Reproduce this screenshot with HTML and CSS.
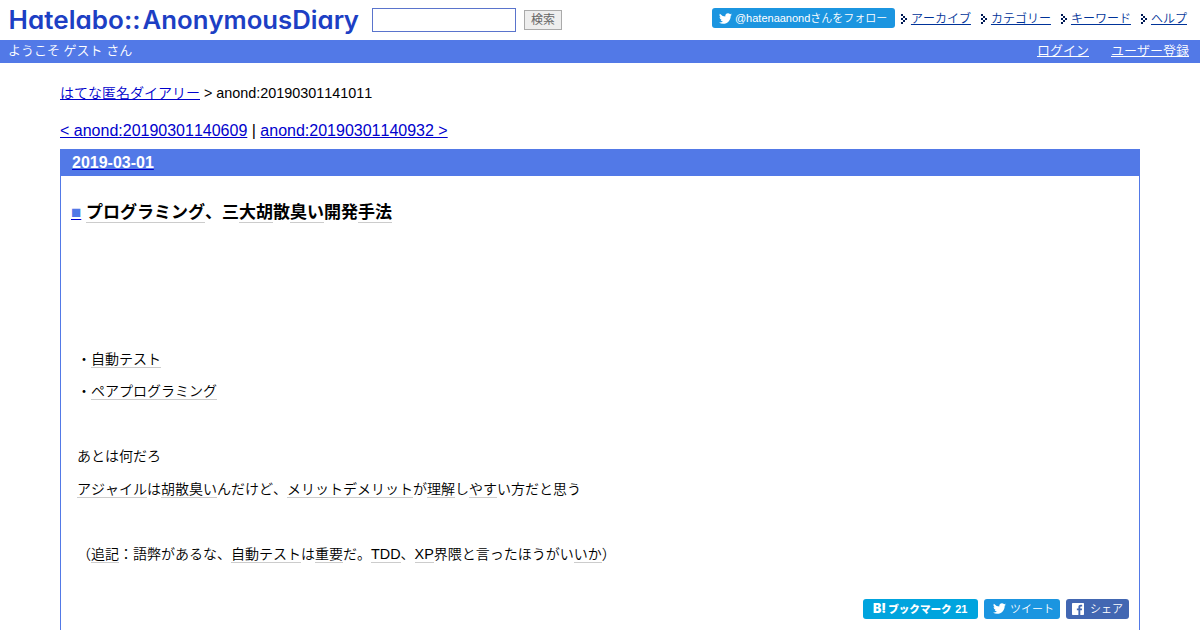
FILE: index.html
```html
<!DOCTYPE html>
<html lang="ja">
<head>
    <meta charset="utf-8">
    <title>プログラミング、三大胡散臭い開発手法</title>
    <link rel="stylesheet" href="styles.css">
</head>
<body>
    <header class="header">
        <a class="logo" href="#">
            <svg width="352" height="40" viewBox="0 0 352 40" xmlns="http://www.w3.org/2000/svg">
                <text x="-0.5" y="28.5" textLength="132" lengthAdjust="spacingAndGlyphs">Hatelabo::</text>
                <text x="133.5" y="28.5" textLength="216.5" lengthAdjust="spacingAndGlyphs">AnonymousDiary</text>
            </svg>
        </a>
        <form class="search">
            <input class="search-word" type="text">
            <button class="search-button" type="button">検索</button>
        </form>
        <div class="header-menu">
            <a class="follow-button" href="#">
                <svg class="bird" viewBox="0 0 24 24"><path d="M24 4.6a10 10 0 0 1-2.8.8 5 5 0 0 0 2.1-2.7 10 10 0 0 1-3.1 1.2 4.9 4.9 0 0 0-8.4 4.5A14 14 0 0 1 1.7 3.2a4.9 4.9 0 0 0 1.5 6.5A5 5 0 0 1 1 9.1v.1a4.9 4.9 0 0 0 3.9 4.8 5 5 0 0 1-2.2.1 4.9 4.9 0 0 0 4.6 3.4A9.9 9.9 0 0 1 0 19.5a14 14 0 0 0 7.5 2.2c9.1 0 14.3-7.7 14-14.6A10 10 0 0 0 24 4.6z"/></svg>
                <span>@hatenaanondさんをフォロー</span>
            </a>
            <ul class="menu">
                <li><svg class="arrow" viewBox="0 0 6 10"><path d="M0 0h2v2H0zM2 2h2v2H2zM0 4h2v2H0zM4 4h2v2H4zM2 6h2v2H2zM0 8h2v2H0z"/></svg><a href="#">アーカイブ</a></li>
                <li><svg class="arrow" viewBox="0 0 6 10"><path d="M0 0h2v2H0zM2 2h2v2H2zM0 4h2v2H0zM4 4h2v2H4zM2 6h2v2H2zM0 8h2v2H0z"/></svg><a href="#">カテゴリー</a></li>
                <li><svg class="arrow" viewBox="0 0 6 10"><path d="M0 0h2v2H0zM2 2h2v2H2zM0 4h2v2H0zM4 4h2v2H4zM2 6h2v2H2zM0 8h2v2H0z"/></svg><a href="#">キーワード</a></li>
                <li><svg class="arrow" viewBox="0 0 6 10"><path d="M0 0h2v2H0zM2 2h2v2H2zM0 4h2v2H0zM4 4h2v2H4zM2 6h2v2H2zM0 8h2v2H0z"/></svg><a href="#">ヘルプ</a></li>
            </ul>
        </div>
    </header>

    <div class="banner">
        <span class="welcome">ようこそ ゲスト さん</span>
        <div class="user-menu">
            <a href="#">ログイン</a>
            <a href="#">ユーザー登録</a>
        </div>
    </div>

    <main class="content">
        <div class="breadcrumb"><a href="#">はてな匿名ダイアリー</a> <span class="latin">&gt; anond:20190301141011</span></div>
        <div class="pager"><a href="#">&lt; anond:20190301140609</a> | <a href="#">anond:20190301140932 &gt;</a></div>

        <div class="day">
            <h2 class="date"><a href="#">2019-03-01</a></h2>
            <div class="section">
                <h3 class="title"><a class="sanchor" href="#">■</a><span><a class="keyword" href="#">プログラミング</a>、三<a class="keyword" href="#">大胡</a>散<a class="keyword" href="#">臭い</a>開発<a class="keyword" href="#">手法</a></span></h3>
                <div class="entry">
                    <p>・<a class="keyword" href="#">自動テスト</a></p>
                    <p>・<a class="keyword" href="#">ペアプログラミング</a></p>
                    <p><br></p>
                    <p>あとは何だろ</p>
                    <p><a class="keyword" href="#">アジャイル</a>は<a class="keyword" href="#">胡散臭い</a>んだけど、<a class="keyword" href="#">メリット</a><a class="keyword" href="#">デメリット</a>が<a class="keyword" href="#">理解</a>し<a class="keyword" href="#">やす</a>い方だと思う</p>
                    <p><br></p>
                    <p>（<a class="keyword" href="#">追記</a>：語弊があるな、<a class="keyword" href="#">自動テスト</a>は<a class="keyword" href="#">重要</a>だ。<a class="keyword latin" href="#">TDD</a>、<a class="keyword latin" href="#">XP</a>界隈と言ったほうがい<a class="keyword" href="#">いか</a>）</p>
                </div>
                <div class="share">
                    <a class="share-button hatena" href="#"><span class="hatena-mark">B!</span><span class="hatena-label">ブックマーク</span><span class="count">21</span></a>
                    <a class="share-button twitter" href="#">
                        <svg class="bird" viewBox="0 0 24 24"><path d="M24 4.6a10 10 0 0 1-2.8.8 5 5 0 0 0 2.1-2.7 10 10 0 0 1-3.1 1.2 4.9 4.9 0 0 0-8.4 4.5A14 14 0 0 1 1.7 3.2a4.9 4.9 0 0 0 1.5 6.5A5 5 0 0 1 1 9.1v.1a4.9 4.9 0 0 0 3.9 4.8 5 5 0 0 1-2.2.1 4.9 4.9 0 0 0 4.6 3.4A9.9 9.9 0 0 1 0 19.5a14 14 0 0 0 7.5 2.2c9.1 0 14.3-7.7 14-14.6A10 10 0 0 0 24 4.6z"/></svg>
                        <span>ツイート</span>
                    </a>
                    <a class="share-button facebook" href="#">
                        <svg class="fb" viewBox="0 0 24 24"><path d="M22.7 0H1.3C.6 0 0 .6 0 1.3v21.4c0 .7.6 1.3 1.3 1.3h11.5v-9.3H9.7v-3.6h3.1V8.4c0-3.1 1.9-4.8 4.7-4.8 1.3 0 2.5.1 2.8.2v3.2h-1.9c-1.5 0-1.8.7-1.8 1.8v2.3h3.6l-.5 3.6h-3.1V24h6.1c.7 0 1.3-.6 1.3-1.3V1.3c0-.7-.6-1.3-1.3-1.3z"/></svg>
                        <span>シェア</span>
                    </a>
                </div>
            </div>
        </div>
    </main>
</body>
</html>
```
FILE: styles.css
```css
* {
    box-sizing: border-box;
}
body {
    margin: 0;
    height: 630px;
    overflow: hidden;
    background: #fff;
    color: #000;
    font-family: "Liberation Sans", "Noto Sans CJK JP", sans-serif;
    font-weight: 350;
    font-kerning: none;
}
a {
    color: #0000cc;
}

/* Header */
.header {
    display: flex;
    height: 40px;
    padding-left: 9px;
}
.logo {
    width: 352px;
    height: 40px;
}
.logo text {
    fill: #1d3fc4;
    font-family: Inter, Lato, sans-serif;
    font-size: 25px;
    font-weight: 600;
    font-feature-settings: "cv11";
}
.search {
    display: flex;
    align-items: center;
    height: 40px;
    margin-left: 11px;
}
.search-word {
    width: 144px;
    height: 24px;
    padding: 2px;
    border: 1px solid #5a74cc;
    background: #fff;
}
.search-button {
    width: 38px;
    height: 20px;
    margin-left: 8px;
    padding: 0;
    border: 1px solid #aaa;
    background: #eee;
    color: #666;
    font-family: inherit;
    font-size: 12px;
    line-height: 16px;
}
.header-menu {
    display: flex;
    align-items: center;
    height: 36px;
    margin-left: auto;
    padding-right: 13px;
}
.bird {
    fill: #fff;
    width: 13px;
    height: 13px;
    flex: none;
}
.follow-button {
    display: flex;
    align-items: center;
    width: 183px;
    height: 20px;
    padding-left: 7px;
    border-radius: 3px;
    background: #1b95e0;
    color: #fff;
    font-size: 11px;
    line-height: 20px;
    white-space: nowrap;
    text-decoration: none;
}
.follow-button .bird {
    margin-right: 3px;
}
.menu {
    display: flex;
    gap: 10px;
    margin: 1px 0 0 6px;
    padding: 0;
    list-style: none;
    font-size: 12px;
    line-height: 18px;
}
.menu li {
    display: flex;
    align-items: center;
}
.menu a {
    color: #003399;
}
.arrow {
    width: 6px;
    height: 10px;
    margin-right: 4px;
    fill: #001a55;
    shape-rendering: crispEdges;
}
.banner {
    display: flex;
    justify-content: space-between;
    height: 23px;
    padding: 0 11px 0 8px;
    background: #5279e7;
    color: #fff;
    font-size: 13px;
    line-height: 22px;
}
.user-menu {
    display: flex;
    gap: 22px;
}
.user-menu a {
    color: #fff;
}

/* Content */
.content {
    padding: 0 60px;
}
.breadcrumb {
    padding-top: 20px;
    font-size: 14px;
    line-height: 20px;
}
.latin {
    font-size: 14.4px;
}
.pager {
    margin-top: 18px;
    line-height: 20px;
}
.day {
    margin-top: 8px;
    border: 1px solid #5279e7;
    border-bottom: none;
}
.date {
    height: 26px;
    margin: 0;
    padding-left: 11px;
    background: #5279e7;
    font-size: 16px;
    line-height: 26px;
}
.date a {
    color: #fff;
    text-decoration-color: #0000cc;
}
.section {
    padding: 25px 10px 30px;
}
.title {
    display: flex;
    margin: 0;
    font-size: 17px;
    line-height: 24px;
}
.sanchor {
    width: 10px;
    margin-right: 5px;
    color: #5279e7;
    font-family: "Liberation Sans", sans-serif;
    text-decoration-color: #0000cc;
}
.keyword {
    color: #000;
    text-decoration: none;
    border-bottom: 1px solid #ccc;
}
.entry {
    margin-top: 125px;
    padding-left: 6px;
    font-size: 14px;
    line-height: 18px;
}
.entry p {
    height: 18px;
    margin: 0 0 14.45px;
}

/* Share buttons */
.share {
    display: flex;
    justify-content: flex-end;
    gap: 6px;
    margin-top: 36px;
}
.share-button {
    display: flex;
    align-items: center;
    height: 20px;
    border-radius: 3px;
    color: #fff;
    font-size: 11px;
    line-height: 20px;
    white-space: nowrap;
    text-decoration: none;
}
.hatena {
    width: 115px;
    padding-left: 10px;
    background: #00a4de;
    font-weight: bold;
}
.hatena-mark {
    margin-right: 2px;
    font-family: Inter, sans-serif;
    font-size: 12.5px;
    font-weight: 900;
}
.hatena-label {
    width: 63px;
    font-size: 10.6px;
    font-weight: 900;
}
.count {
    margin-left: 4px;
    font-size: 11px;
}
.twitter {
    width: 76px;
    padding-left: 9px;
    background: #1b95e0;
}
.twitter .bird {
    margin-right: 4px;
}
.facebook {
    width: 63px;
    padding-left: 6px;
    background: #4267b2;
}
.fb {
    width: 12px;
    height: 12px;
    margin-right: 6px;
    fill: #fff;
}
```
